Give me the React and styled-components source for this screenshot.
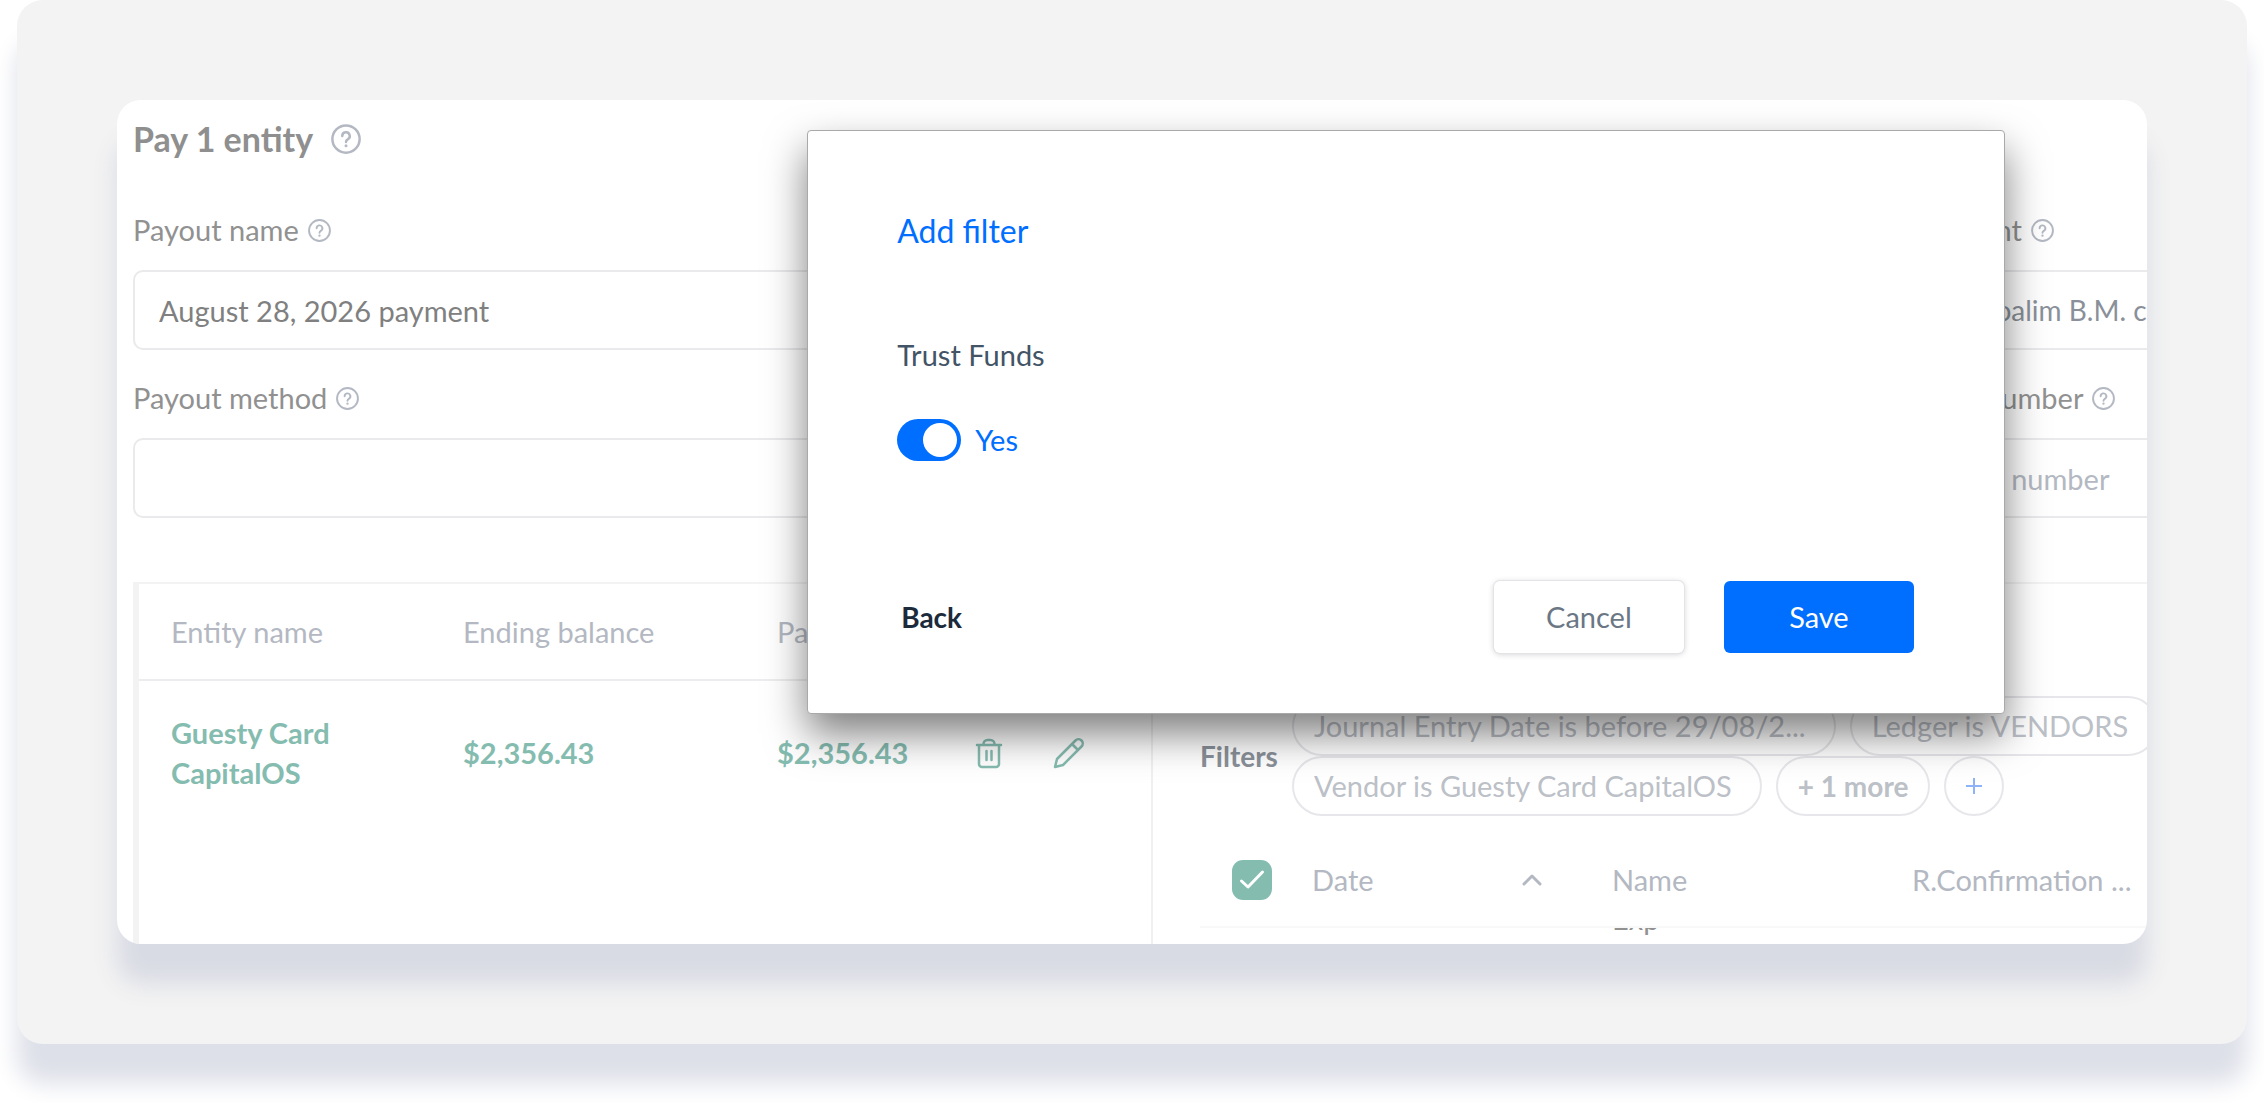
import React, { useState } from "react";
import styled, { createGlobalStyle, css } from "styled-components";

const GlobalStyle = createGlobalStyle`
  *, *::before, *::after {
    box-sizing: border-box;
  }
  body {
    margin: 0;
    background: #fff;
    color: #919191;
    font-family: Lato, "Open Sans", sans-serif;
    font-size: 29px;
    line-height: 40px;
  }
  button, input {
    font: inherit;
    color: inherit;
  }
`;

const Page = styled.div`
  padding: 0 17px 59px;
  overflow: hidden;
`;

const Frame = styled.div`
  padding: 100px;
  border-radius: 26px;
  background: #f3f3f3;
  box-shadow: 0 40px 24px #dee0e9;
`;

const Card = styled.div`
  position: relative;
  border-radius: 24px;
  background: #fff;
  box-shadow: 0 40px 24px #d9dbe4;
`;

const CardBody = styled.main`
  padding: 15px 0 0 16px;
  border-radius: 24px;
  overflow: hidden;
`;

const Heading = styled.header`
  display: flex;
  align-items: center;
  gap: 18px;
  height: 48px;
`;

const Title = styled.h1`
  margin: 0;
  color: #8f8f8f;
  font-size: 34px;
  font-weight: 700;
`;

/* runs past the card edge, the card cuts it off */
const Fields = styled.form`
  display: grid;
  grid-template-columns: 1fr 500px;
  gap: 28px 32px;
  margin: 47px -203px 64px 0;
`;

const Field = styled.div`
  display: flex;
  flex-direction: column;
  gap: 20px;
`;

const FieldLabel = styled.div`
  display: flex;
  align-items: center;
  gap: 9px;
`;

const TextInput = styled.input`
  width: 100%;
  height: 80px;
  padding: 0 24px;
  border: 2px solid #eaeaec;
  border-radius: 10px;
  background: #fff;
  color: #808080;
  outline: none;

  ${({ $muted }) =>
    $muted &&
    css`
      color: #8a9099;
      font-size: 28px;
    `}

  &::placeholder {
    color: #b3b8c2;
    opacity: 1;
  }
`;

const Panes = styled.section`
  display: grid;
  grid-template-columns: minmax(0, 1014px) minmax(0, 1fr);
  height: 362px;
  border-top: 2px solid #f3f3f3;
  border-left: 6px solid #f3f3f3;
`;

const EntityPane = styled.div`
  border-right: 2px solid #f0f0f1;
`;

const LedgerPane = styled.div`
  padding: 112px 0 0 47px;
`;

const Table = styled.table`
  width: 100%;
  border-collapse: collapse;
  table-layout: fixed;
  text-align: left;
`;

const EntityHead = styled.th`
  width: ${({ $width }) => $width};
  height: 96px;
  padding: 0 0 0 32px;
  border-bottom: 2px solid #ededef;
  color: #b3b8c2;
  font-weight: 400;
  white-space: nowrap;
`;

const EntityCell = styled.td`
  height: 144px;
  padding: 0 0 0 32px;
  color: #85bcb0;
  font-weight: 700;
`;

const Actions = styled.div`
  display: flex;
  gap: 48px;
`;

const IconButton = styled.button`
  display: flex;
  padding: 0;
  border: 0;
  background: none;
`;

const Filters = styled.div`
  display: flex;
  align-items: center;
  gap: 14px;
  margin-right: -40px;
`;

const FiltersLabel = styled.strong`
  width: 78px;
  color: #8a9099;
  font-size: 28px;
`;

const PillRows = styled.div`
  flex: 1;
`;

const PillRow = styled.div`
  display: flex;
  gap: 14px;
`;

const Pill = styled.button`
  flex: none;
  height: 60px;
  padding: 0 28px 0 20px;
  border: 2px solid #e7e7eb;
  border-radius: 30px;
  background: transparent;
  color: #bcc0c7;
  white-space: nowrap;

  ${({ $bold }) =>
    $bold &&
    css`
      padding: 0 20px;
      font-size: 28px;
      font-weight: 700;
    `}

  ${({ $round }) =>
    $round &&
    css`
      display: flex;
      align-items: center;
      justify-content: center;
      width: 60px;
      padding: 0;
    `}
`;

const LedgerHead = styled.th`
  width: ${({ $width }) => $width};
  height: 111px;
  padding: 17px 0 0;
  border-bottom: 2px solid #f8f8f8;
  color: #b3b8c2;
  font-weight: 400;
  white-space: nowrap;
`;

const SortLabel = styled.div`
  display: flex;
  align-items: center;
  justify-content: space-between;
  padding-right: 70px;
`;

const LedgerCell = styled.td`
  padding: 0;
`;

/* the first row is scrolled almost out of view */
const ScrolledText = styled.div`
  display: flex;
  align-items: flex-end;
  height: 16px;
  padding-bottom: 5px;
  overflow: hidden;
`;

const CheckWrap = styled.label`
  display: grid;
  width: 40px;
  height: 40px;
  margin-left: 32px;

  > * {
    grid-area: 1 / 1;
  }
`;

const CheckInput = styled.input`
  appearance: none;
  width: 40px;
  height: 40px;
  margin: 0;
  border-radius: 11px;
  background: #84bcb0;
`;

const Modal = styled.section`
  position: absolute;
  top: 30px;
  left: 34%;
  right: 7%;
  padding: 80px 90px 60px 89px;
  border: 1px solid #a9a9a9;
  border-radius: 4px;
  background: #fff;
  box-shadow: 0 20px 40px rgba(0, 0, 0, 0.5);
`;

const ModalTitle = styled.h2`
  margin: 0 0 84px;
  color: #006eff;
  font-size: 32px;
  font-weight: 400;
`;

const ModalLabel = styled.div`
  margin-bottom: 44px;
  color: #425466;
`;

const SwitchRow = styled.label`
  display: flex;
  align-items: center;
  gap: 14px;
  height: 42px;
  margin-bottom: 120px;
  color: #006eff;
`;

const SwitchInput = styled.input`
  appearance: none;
  display: flex;
  width: 64px;
  height: 42px;
  margin: 0;
  padding: 4px;
  border-radius: 21px;
  background: #b3b8c2;

  &::before {
    content: "";
    width: 34px;
    height: 34px;
    border-radius: 50%;
    background: #fff;
  }

  &:checked {
    justify-content: flex-end;
    background: #006eff;
  }
`;

const ModalFooter = styled.footer`
  display: flex;
  align-items: center;
  gap: 40px;
`;

const BackButton = styled.button`
  margin-right: auto;
  padding: 0 4px;
  border: 0;
  background: none;
  color: #1c2b3c;
  font-size: 28px;
  font-weight: 700;
`;

const ActionButton = styled.button`
  width: 190px;
  height: 72px;
  border: 0;
  border-radius: 6px;
  background: ${({ $primary }) => ($primary ? "#006eff" : "#fff")};
  box-shadow: ${({ $primary }) =>
    $primary ? "none" : "0 0 0 1px #e3e4e8, 0 1px 6px rgba(0, 0, 0, 0.2)"};
  color: ${({ $primary }) => ($primary ? "#fff" : "#6b7785")};
`;

const HelpIcon = ({ size = 23 }) => (
  <svg width={size} height={size} viewBox="0 0 24 24" fill="none" stroke="#b3b8c2" strokeWidth="2">
    <circle cx="12" cy="12" r="10.9" />
    <path d="M9 9.600a3 3 0 1 1 4.400 2.700c-.9.5-1.400 1-1.400 2" strokeLinecap="round" />
    <circle cx="12" cy="17.400" r="1.200" fill="#b3b8c2" stroke="none" />
  </svg>
);

const TrashIcon = () => (
  <svg width="32" height="32" viewBox="0 0 32 32" fill="none" stroke="#85bcb0" strokeWidth="2.5" strokeLinecap="round" strokeLinejoin="round">
    <path d="M4 8h24M6 8v19a3 3 0 0 0 3 3h14a3 3 0 0 0 3-3V8M10.500 8V7a4 4 0 0 1 4-4h3a4 4 0 0 1 4 4v1M13.500 14v9M18.500 14v9" />
  </svg>
);

const PencilIcon = () => (
  <svg width="32" height="32" viewBox="0 0 32 32" fill="none" stroke="#85bcb0" strokeWidth="2.5" strokeLinejoin="round">
    <path d="M2 30l2-8L22.500 3.500a4 4 0 0 1 6 6L10 28zM19 7l6 6" />
  </svg>
);

const entityColumns = [
  ["Entity name", "292px"],
  ["Ending balance", "314px"],
  ["Payout", "196px"],
];

const LabelledInput = ({ id, label, ...inputProps }) => (
  <Field>
    <FieldLabel>
      <label htmlFor={id}>{label}</label>
      <HelpIcon />
    </FieldLabel>
    <TextInput id={id} {...inputProps} />
  </Field>
);

const EntityTable = () => (
  <Table>
    <thead>
      <tr>
        {entityColumns.map(([name, width]) => (
          <EntityHead key={name} $width={width}>
            {name}
          </EntityHead>
        ))}
        <EntityHead aria-label="Actions" />
      </tr>
    </thead>
    <tbody>
      <tr>
        <EntityCell>
          Guesty Card
          <br />
          CapitalOS
        </EntityCell>
        <EntityCell>$2,356.43</EntityCell>
        <EntityCell>$2,356.43</EntityCell>
        <EntityCell>
          <Actions>
            <IconButton aria-label="Delete">
              <TrashIcon />
            </IconButton>
            <IconButton aria-label="Edit">
              <PencilIcon />
            </IconButton>
          </Actions>
        </EntityCell>
      </tr>
    </tbody>
  </Table>
);

const LedgerTable = () => (
  <Table>
    <thead>
      <tr>
        <LedgerHead $width="112px">
          <CheckWrap>
            <CheckInput type="checkbox" defaultChecked aria-label="Select all" />
            <svg width="40" height="40" viewBox="0 0 40 40" fill="none" stroke="#fff" strokeWidth="3" strokeLinecap="round" strokeLinejoin="round">
              <path d="M9.500 21l6.500 6 14.500-15" />
            </svg>
          </CheckWrap>
        </LedgerHead>
        <LedgerHead $width="300px">
          <SortLabel>
            Date
            <svg width="20" height="12" viewBox="0 0 20 12" fill="none" stroke="#b3b8c2" strokeWidth="3" strokeLinecap="round" strokeLinejoin="round">
              <path d="M2 10l8-8 8 8" />
            </svg>
          </SortLabel>
        </LedgerHead>
        <LedgerHead $width="300px">Name</LedgerHead>
        <LedgerHead>R.Confirmation ...</LedgerHead>
      </tr>
    </thead>
    <tbody>
      <tr>
        <LedgerCell />
        <LedgerCell />
        <LedgerCell>
          <ScrolledText>Exp</ScrolledText>
        </LedgerCell>
        <LedgerCell />
      </tr>
    </tbody>
  </Table>
);

const FilterModal = () => {
  const [trustFunds, setTrustFunds] = useState(true);

  return (
    <Modal role="dialog" aria-labelledby="filter-title">
      <ModalTitle id="filter-title">Add filter</ModalTitle>
      <ModalLabel id="trust-funds">Trust Funds</ModalLabel>
      <SwitchRow>
        <SwitchInput
          type="checkbox"
          role="switch"
          aria-describedby="trust-funds"
          checked={trustFunds}
          onChange={(e) => setTrustFunds(e.target.checked)}
        />
        {trustFunds ? "Yes" : "No"}
      </SwitchRow>
      <ModalFooter>
        <BackButton>Back</BackButton>
        <ActionButton>Cancel</ActionButton>
        <ActionButton $primary>Save</ActionButton>
      </ModalFooter>
    </Modal>
  );
};

export default function App() {
  return (
    <Page>
      <GlobalStyle />
      <Frame>
        <Card>
          <CardBody>
            <Heading>
              <Title>Pay 1 entity</Title>
              <HelpIcon size={30} />
            </Heading>
            <Fields>
              <LabelledInput id="name" label="Payout name" defaultValue="August 28, 2026 payment" />
              <LabelledInput id="account" label="Bank account" defaultValue="Bank Hapoalim B.M. checking" $muted />
              <LabelledInput id="method" label="Payout method" />
              <LabelledInput id="reference" label="Reference number" placeholder="Reference number" />
            </Fields>
            <Panes>
              <EntityPane>
                <EntityTable />
              </EntityPane>
              <LedgerPane>
                <Filters>
                  <FiltersLabel>Filters</FiltersLabel>
                  <PillRows>
                    <PillRow>
                      <Pill>Journal Entry Date is before 29/08/2...</Pill>
                      <Pill>Ledger is VENDORS</Pill>
                    </PillRow>
                    <PillRow>
                      <Pill>Vendor is Guesty Card CapitalOS</Pill>
                      <Pill $bold>+ 1 more</Pill>
                      <Pill $round aria-label="Add filter">
                        <svg width="16" height="16" viewBox="0 0 16 16" stroke="#8db4f9" strokeWidth="2">
                          <path d="M8 0v16M0 8h16" />
                        </svg>
                      </Pill>
                    </PillRow>
                  </PillRows>
                </Filters>
                <LedgerTable />
              </LedgerPane>
            </Panes>
          </CardBody>
          <FilterModal />
        </Card>
      </Frame>
    </Page>
  );
}
